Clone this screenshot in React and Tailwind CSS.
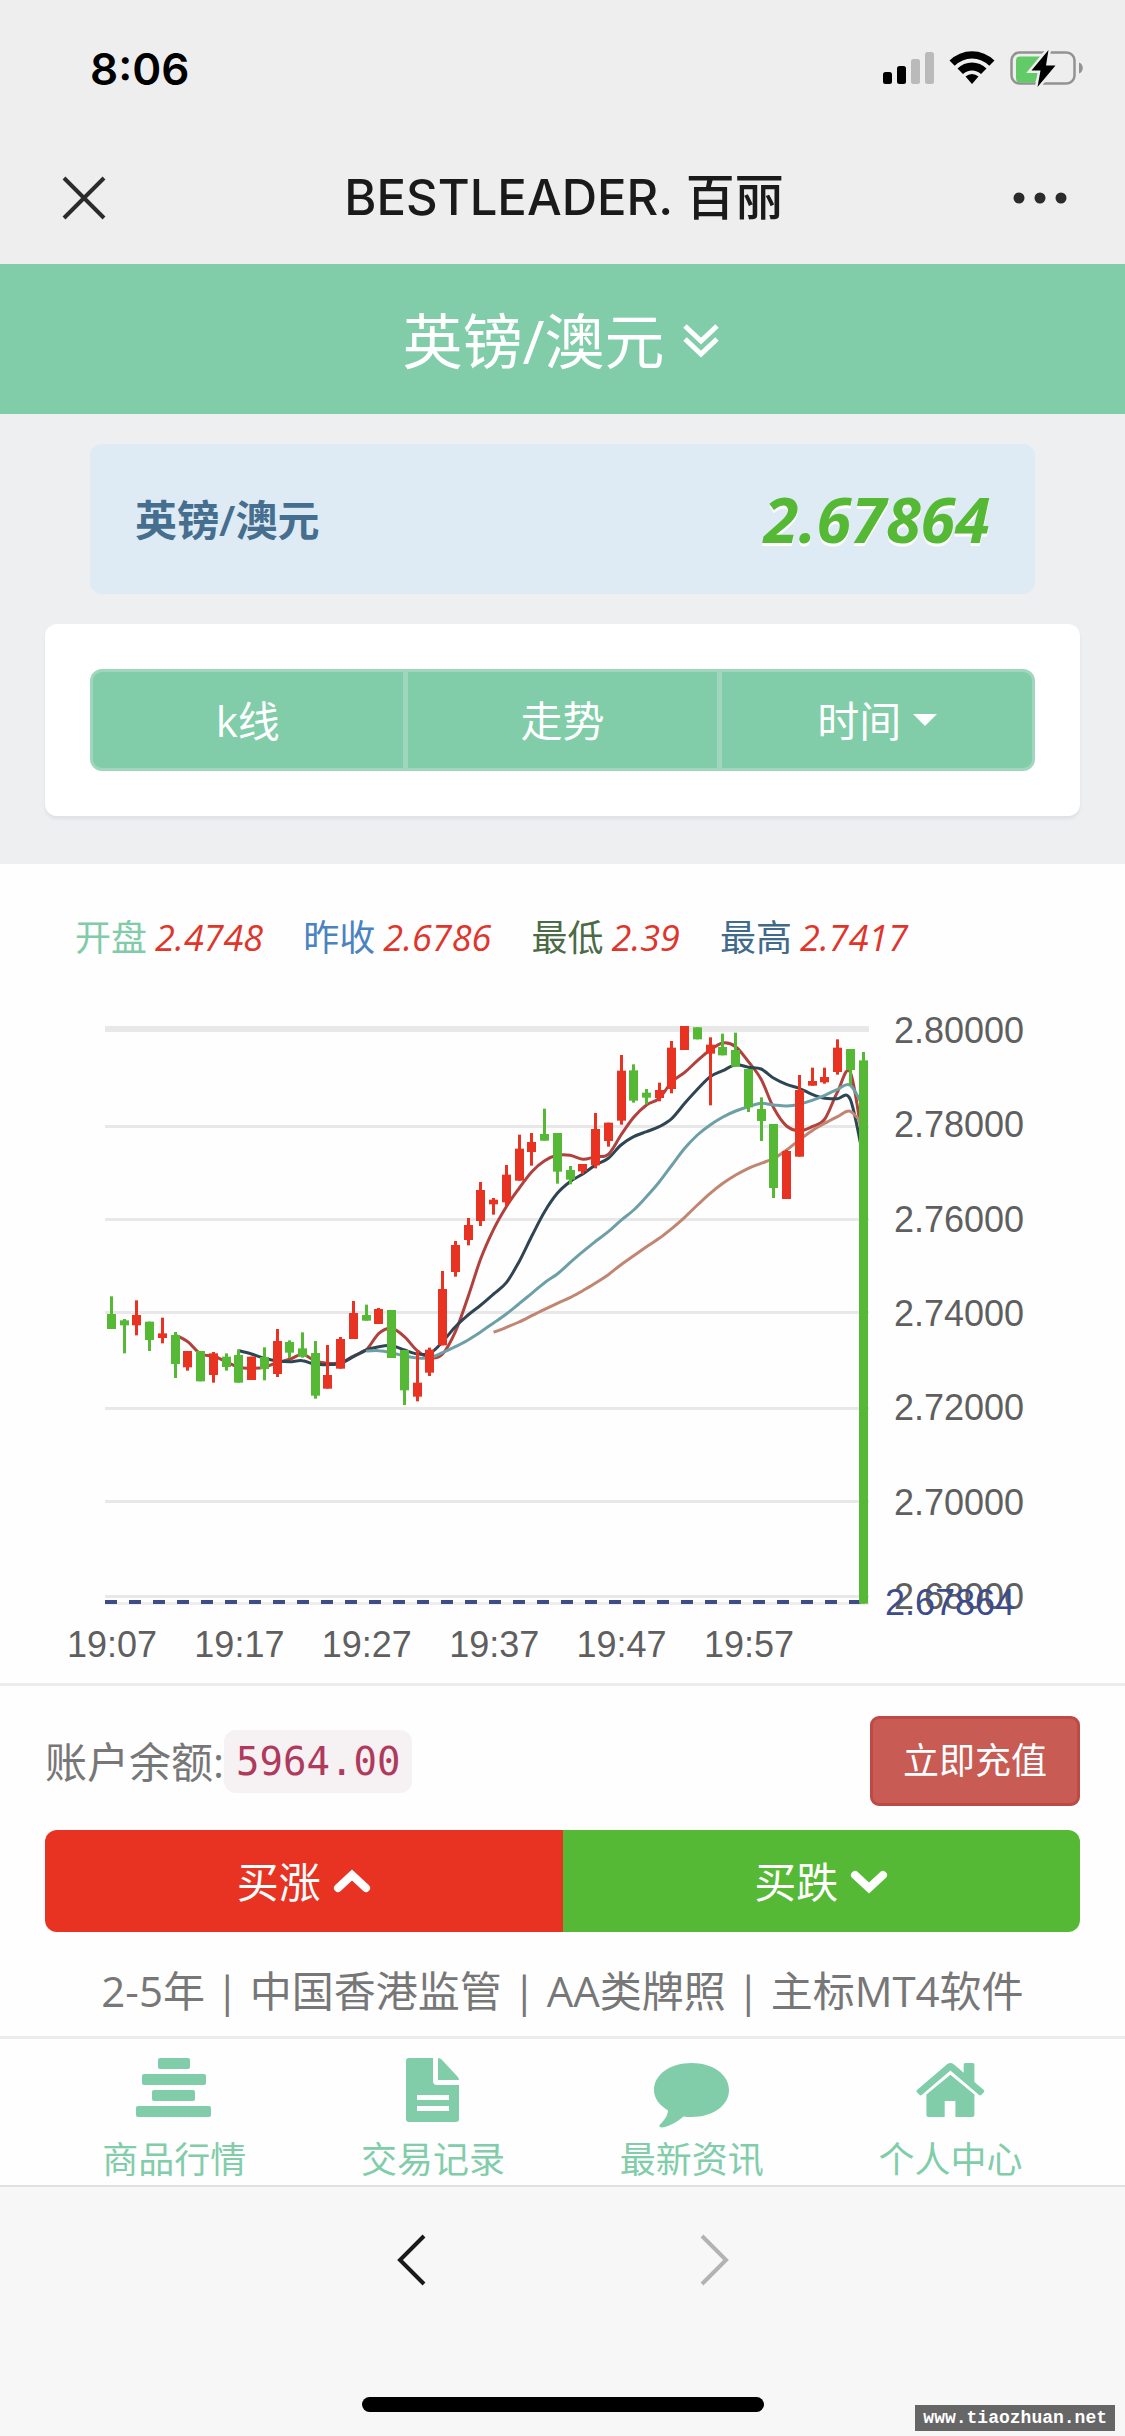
import { useId } from "react";

const SANS = "font-['Open_Sans','Noto_Sans_CJK_SC',sans-serif]";

// Candle: [direction, high, body top, body bottom, low], in thirds of a chart unit
const CANDLES = [
  ["g", 889, 942, 987, 987], ["g", 957, 961, 976, 1060], ["r", 901, 945, 976, 1006], ["g", 965, 965, 1020, 1053],
  ["r", 953, 1000, 1014, 1030], ["g", 996, 1005, 1092, 1134], ["r", 1053, 1053, 1102, 1112], ["g", 1053, 1053, 1144, 1144],
  ["r", 1056, 1060, 1125, 1148], ["g", 1060, 1070, 1101, 1112], ["g", 1048, 1065, 1148, 1148], ["r", 1070, 1070, 1140, 1140],
  ["g", 1042, 1071, 1107, 1141], ["r", 987, 1023, 1122, 1131], ["g", 1021, 1026, 1058, 1074], ["g", 997, 1045, 1070, 1073],
  ["g", 1023, 1059, 1187, 1196], ["r", 1035, 1125, 1166, 1166], ["r", 1011, 1017, 1106, 1106], ["r", 903, 939, 1017, 1017],
  ["g", 914, 945, 962, 962], ["r", 924, 927, 972, 972], ["g", 930, 930, 1074, 1074], ["g", 1050, 1050, 1171, 1215],
  ["r", 1050, 1148, 1190, 1204], ["r", 1043, 1049, 1118, 1128], ["r", 813, 867, 1036, 1036], ["r", 723, 735, 816, 830],
  ["r", 654, 675, 720, 736], ["r", 546, 570, 663, 678], ["r", 594, 599, 613, 644], ["r", 495, 524, 607, 620],
  ["r", 404, 446, 542, 542], ["r", 399, 426, 456, 497], ["g", 326, 402, 422, 422], ["g", 399, 399, 515, 551],
  ["g", 498, 510, 539, 553], ["r", 492, 492, 514, 522], ["r", 339, 387, 496, 505], ["r", 368, 368, 423, 440],
  ["r", 165, 212, 362, 374], ["g", 193, 211, 302, 308], ["g", 267, 278, 293, 313], ["r", 248, 270, 294, 304],
  ["r", 123, 143, 267, 280], ["r", 78, 78, 150, 150], ["g", 82, 82, 118, 118], ["r", 112, 134, 161, 316],
  ["g", 101, 141, 166, 166], ["g", 98, 150, 200, 200], ["g", 207, 207, 322, 336], ["g", 292, 327, 363, 423],
  ["g", 372, 372, 564, 594], ["r", 450, 453, 597, 597], ["r", 225, 270, 470, 470], ["r", 203, 243, 257, 257],
  ["r", 203, 231, 247, 251], ["r", 118, 143, 216, 224], ["g", 147, 147, 210, 255], ["g", 156, 181, 1811, 1811],
];

const AVERAGES = [
  {
    color: "#b0413c",
    start: 5,
    values: [1005, 1025, 1062, 1068, 1085, 1102, 1105, 1102, 1088, 1078, 1063, 1083, 1090, 1088, 1068, 1050, 1000, 985, 1010, 1052, 1074, 1062, 995, 890, 775, 688, 620, 565, 515, 482, 466, 466, 478, 470, 463, 405, 352, 315, 295, 245, 217, 182, 150, 129, 140, 185, 238, 325, 378, 392, 380, 357, 275, 217, 430],
  },
  {
    color: "#2f4554",
    start: 10,
    values: [1052, 1062, 1075, 1083, 1085, 1082, 1093, 1094, 1090, 1070, 1050, 1040, 1037, 1050, 1062, 1060, 1025, 980, 945, 915, 882, 848, 785, 708, 635, 580, 545, 522, 495, 475, 435, 410, 395, 380, 355, 310, 268, 230, 212, 194, 202, 207, 235, 253, 265, 283, 295, 296, 298, 470],
  },
  {
    color: "#6f9fa6",
    start: 20,
    values: [1053, 1052, 1058, 1068, 1074, 1073, 1058, 1040, 1020, 995, 969, 942, 911, 880, 848, 822, 788, 755, 724, 695, 661, 630, 590, 546, 495, 445, 405, 375, 351, 333, 320, 310, 315, 318, 313, 301, 286, 268, 256, 320],
  },
  {
    color: "#c08672",
    start: 30,
    values: [997, 982, 966, 947, 928, 910, 893, 872, 849, 824, 794, 767, 740, 715, 685, 652, 615, 580, 550, 525, 505, 490, 475, 450, 420, 392, 370, 350, 334, 375],
  },
];

const GRID = [126, 219, 312, 408, 501];
const PRICES = ["2.80000", "2.78000", "2.76000", "2.74000", "2.72000", "2.70000", "2.68000"];
const TIMES = ["19:07", "19:17", "19:27", "19:37", "19:47", "19:57"];

const xAt = (i) => 111.4 + i * 12.74;

// Catmull-Rom spline through the points of one average
function spline({ start, values }) {
  const p = values.map((v, i) => [xAt(start + i), v / 3]);
  const at = (i) => p[Math.max(0, Math.min(p.length - 1, i))];
  let d = `M${p[0][0].toFixed(1)} ${p[0][1].toFixed(1)}`;
  for (let i = 0; i < p.length - 1; i++) {
    const [a, b, c, e] = [at(i - 1), at(i), at(i + 1), at(i + 2)];
    const n = [b[0] + (c[0] - a[0]) / 6, b[1] + (c[1] - a[1]) / 6, c[0] - (e[0] - b[0]) / 6, c[1] - (e[1] - b[1]) / 6, c[0], c[1]];
    d += `C${n.map((v) => v.toFixed(1)).join(" ")}`;
  }
  return d;
}

function CandleChart() {
  const title = useId();
  return (
    <svg viewBox="0 10 1125 673" className="block w-full" role="img" aria-labelledby={title}>
      <title id={title}>英镑/澳元 k线</title>
      <rect x="105" y="26" width="764" height="6" fill="#e8e8e8" />
      {GRID.map((y) => (
        <rect key={y} x="105" y={y - 1} width="764" height="3" fill="#e8e8e8" />
      ))}
      <rect x="105" y="595" width="764" height="3" fill="#e8e8e8" />
      <rect x="105" y="602" width="764" height="3" fill="#eeeeee" />
      {AVERAGES.map((a) => (
        <path key={a.color} d={spline(a)} fill="none" stroke={a.color} strokeWidth="3" />
      ))}
      <path d="M105 602H869" stroke="#3f4d86" strokeWidth="4" strokeDasharray="12 12" />
      {CANDLES.map(([dir, high, top, bottom, low], i) => (
        <g key={i} fill={dir === "r" ? "#e83323" : "#55b936"}>
          <rect x={Math.round(xAt(i) - 1.5)} y={high / 3} width="3" height={(low - high) / 3} />
          <rect x={Math.round(xAt(i) - 1.5) - 3} y={top / 3} width="9" height={(bottom - top) / 3} />
        </g>
      ))}
      <g className="font-['Liberation_Sans',sans-serif] text-[36px]" fill="#5f5f5f">
        {PRICES.map((p, i) => (
          <text key={p} x="894" y={43 + i * 94.3}>{p}</text>
        ))}
        {TIMES.map((t, i) => (
          <text key={t} x={xAt(i * 10) + 0.6} y="657" textAnchor="middle">{t}</text>
        ))}
        <text x="885" y="615" fill="#3c4b8c">2.67864</text>
      </g>
    </svg>
  );
}

function StatusIcons() {
  return (
    <svg viewBox="0 0 204 40" className="w-[204px]" aria-hidden="true">
      <rect x="2" y="23" width="9" height="12" rx="2.5" />
      <rect x="16" y="17" width="9" height="18" rx="2.5" />
      <rect x="30" y="10" width="9" height="25" rx="2.5" fill="#bababa" />
      <rect x="44" y="3" width="9" height="32" rx="2.5" fill="#bababa" />
      <path d="M68.500 11.500A32 32 0 0 1 113.500 11.500L108.300 16.700A24.500 24.500 0 0 0 73.700 16.700Z" />
      <path d="M76.500 19.500A20.500 20.500 0 0 1 105.500 19.500L100 25A13 13 0 0 0 82 25Z" />
      <path d="M84.500 27.600A9.500 9.500 0 0 1 97.500 27.600L91 35Z" />
      <rect x="130.500" y="3.500" width="63" height="31" rx="8" fill="none" stroke="#929292" strokeWidth="2.500" />
      <path d="M198 13.500c5 1.500 5 9.500 0 11z" fill="#929292" />
      <path d="M139 7.500h27l-12 26h-15q-4 0-4-4v-18q0-4 4-4z" fill="#62cb67" />
      <path d="M167.500 1L150.500 21.500h9L156.500 38L174.500 16.500h-9.500z" fill="#000" stroke="#eeeeee" strokeWidth="5" paintOrder="stroke" />
    </svg>
  );
}

const TABS = [
  {
    label: "商品行情",
    icon: (
      <>
        <rect x="24" y="3" width="32" height="11" rx="2" />
        <rect x="8" y="19" width="64" height="11" rx="2" />
        <rect x="18" y="35" width="43" height="11" rx="2" />
        <rect x="2" y="51" width="75" height="11" rx="2" />
      </>
    ),
  },
  {
    label: "交易记录",
    icon: (
      <>
        <path d="M13 6q0-3 3-3h24v23q0 4 4 4h22v34q0 3-3 3H16q-3 0-3-3zM24 40v5h32v-5zM24 51v5h32v-5z" fillRule="evenodd" />
        <path d="M45 3q3 0 5 3l14 15q2 2 2 4H45z" />
      </>
    ),
  },
  {
    label: "最新资讯",
    icon: <path d="M39.500 8C60 8 77 19 77 35S60 62 39.500 62q-4 0-8-.5C25 67 17 71.500 10 72.500q-3 0-2.500-2.500c5-5 8-9 8.500-14.500C7 50 2 43 2 35 2 19 19 8 39.500 8z" />,
  },
  {
    label: "个人中心",
    icon: (
      <>
        <path d="M39.400 19.700L63.400 39.500V60q0 2-2 2h-17V46H33.700v16H17.400q-2 0-2-2V39.500z" />
        <path d="M6 35L36.400 9q3-2.200 6 0L52.700 17.800V9.500q0-1.500 1.500-1.500h7.700q1.500 0 1.500 1.500V27L72.800 35q1 1 .3 2l-3 3q-1 .8-2 0L39.400 15.500 10.700 40q-1 .8-2 0l-3-3q-.7-1 .3-2z" />
      </>
    ),
  },
];

const STATS = [
  ["开盘", "2.4748", "text-[#81cba9]"],
  ["昨收", "2.6786", "text-[#4a83c0]"],
  ["最低", "2.39", "text-[#4a6b45]"],
  ["最高", "2.7417", "text-[#3f6a8a]"],
];

export default function App() {
  return (
    <div className={`${SANS} min-h-screen bg-[#f7f7f7] text-[#777777]`}>
      <header className="bg-[#eeeeee] pt-11">
        <div className="flex h-[50px] items-center justify-between pr-10 pl-[90px] text-black">
          <time className="font-['Inter',sans-serif] text-[44px] font-semibold">8:06</time>
          <StatusIcons />
        </div>
        <div className="mt-[38px] grid h-[132px] grid-cols-[1fr_auto_1fr] items-center pr-[57px] pl-[60px] text-[#1a1a1a]">
          <button aria-label="关闭">
            <svg viewBox="0 0 48 48" className="w-12" fill="none" stroke="#2b2b2b" strokeWidth="4">
              <path d="M4 4l40 40M44 4L4 44" />
            </svg>
          </button>
          <h1 className="font-['Inter','Noto_Sans_CJK_SC',sans-serif] text-[49px] font-medium">BESTLEADER. 百丽</h1>
          <button aria-label="更多" className="justify-self-end">
            <svg viewBox="0 0 56 12" className="w-14" fill="#2b2b2b">
              <circle cx="7" cy="6" r="5.500" />
              <circle cx="28" cy="6" r="5.500" />
              <circle cx="49" cy="6" r="5.500" />
            </svg>
          </button>
        </div>
      </header>

      <button className="flex h-[150px] w-full items-center justify-center gap-[18px] bg-[#81cdaa] pt-1 pr-1 text-[60px] text-white">
        英镑/澳元
        <svg viewBox="0 0 36 34" className="w-9" fill="none" stroke="currentColor" strokeWidth="5" aria-hidden="true">
          <path d="M2 2L18 17 34 2M2 15L18 30 34 15" />
        </svg>
      </button>

      <section className="bg-[#edeff1] px-[45px] pt-[30px] pb-12">
        <div className="mx-[45px] flex h-[150px] items-center justify-between rounded-xl bg-[#deebf4] px-[45px]">
          <strong className="text-[42px] font-semibold text-[#456e8f]">英镑/澳元</strong>
          <em className="text-[63px] font-bold text-[#55b936] [text-shadow:0_3px_0_#ffffff]">2.67864</em>
        </div>
        <div className="mt-[30px] rounded-xl bg-white p-[45px] shadow-[0_3px_3px_#dfe1e4]">
          <div className="grid h-[102px] grid-cols-3 gap-[5px] overflow-hidden rounded-xl border-[3px] border-[#9fd6bd] bg-[#9fd6bd] text-[42px] text-white">
            <button className="bg-[#81cdaa]">k线</button>
            <button className="bg-[#81cdaa]">走势</button>
            <button className="flex items-center justify-center gap-3 bg-[#81cdaa]">
              时间
              <svg viewBox="0 0 24 12" className="w-6" fill="currentColor" aria-hidden="true">
                <path d="M0 0h24L12 12z" />
              </svg>
            </button>
          </div>
        </div>
      </section>

      <main className="bg-[#fefefe]">
        <dl className="flex gap-10 px-[75px] pt-[49px] pb-[47px] text-[36px] leading-[50px]">
          {STATS.map(([label, value, color]) => (
            <div key={label} className="flex gap-2">
              <dt className={color}>{label}</dt>
              <dd className="text-[#e0352b] italic">{value}</dd>
            </div>
          ))}
        </dl>
        <CandleChart />

        <div className="flex items-center justify-between border-t-[3px] border-[#ececec] px-[45px] pt-[30px] text-[42px]">
          <p className="flex items-center">
            账户余额:
            <code className="rounded-xl bg-[#f6f1f3] px-3 font-['DejaVu_Sans_Mono',monospace] text-[39px] leading-[63px] text-[#b03a5b]">5964.00</code>
          </p>
          <button className="h-[90px] rounded-[9px] border-[3px] border-[#bd4a47] bg-[#c85b54] px-[30px] text-[36px] text-white">立即充值</button>
        </div>

        <div className="mx-[45px] mt-6 grid h-[102px] grid-cols-2 overflow-hidden rounded-xl text-[42px] text-white">
          <button className="flex items-center justify-center gap-3 bg-[#e83323]">
            买涨
            <svg viewBox="0 0 38 26" className="w-[38px]" fill="none" stroke="currentColor" strokeWidth="8" strokeLinecap="round" aria-hidden="true">
              <path d="M5 20L19 7 33 20" />
            </svg>
          </button>
          <button className="flex items-center justify-center gap-3 bg-[#55b936]">
            买跌
            <svg viewBox="0 0 38 26" className="w-[38px]" fill="none" stroke="currentColor" strokeWidth="8" strokeLinecap="round" aria-hidden="true">
              <path d="M5 7L19 20 33 7" />
            </svg>
          </button>
        </div>

        <p className="pt-[29px] pb-[15px] text-center text-[42px] leading-[60px] whitespace-nowrap">
          2-5年 | 中国香港监管 | AA类牌照 | 主标MT4软件
        </p>

        <nav className="grid grid-cols-4 border-t-[3px] border-b-2 border-t-[#ececec] border-b-[#e0e0e0] px-[45px] text-[36px] text-[#81cdaa]">
          {TABS.map((tab) => (
            <a key={tab.label} href="#" className="flex flex-col items-center gap-1 pt-4 leading-[50px]">
              <svg viewBox="0 0 80 76" className="w-20" fill="currentColor" aria-hidden="true">
                {tab.icon}
              </svg>
              {tab.label}
            </a>
          ))}
        </nav>
      </main>

      <footer className="relative pt-[46px] pb-[25px]">
        <div className="flex justify-center gap-[270px]">
          <button aria-label="后退">
            <svg viewBox="0 0 32 54" className="w-8" fill="none" stroke="#1a1a1a" strokeWidth="4">
              <path d="M28 3L4 27 28 51" />
            </svg>
          </button>
          <button aria-label="前进" disabled>
            <svg viewBox="0 0 32 54" className="w-8" fill="none" stroke="#b3b3b3" strokeWidth="4">
              <path d="M4 3L28 27 4 51" />
            </svg>
          </button>
        </div>
        <div className="mx-auto mt-[110px] h-[15px] w-[402px] rounded-full bg-black" />
        <a href="#" className="absolute right-2.5 bottom-1.5 bg-[#666666] px-2 font-['Liberation_Mono',monospace] text-[18px] leading-[26px] font-bold text-white">
          www.tiaozhuan.net
        </a>
      </footer>
    </div>
  );
}
